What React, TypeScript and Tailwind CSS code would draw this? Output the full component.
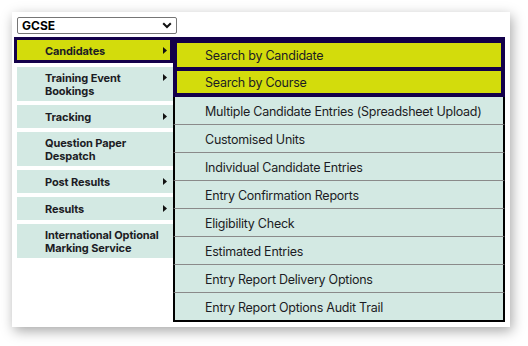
import React from 'react';

const leftItems: { label: string[]; arrow: boolean }[] = [
  { label: ['Training Event', 'Bookings'], arrow: true },
  { label: ['Tracking'], arrow: true },
  { label: ['Question Paper', 'Despatch'], arrow: false },
  { label: ['Post Results'], arrow: true },
  { label: ['Results'], arrow: true },
  { label: ['International Optional', 'Marking Service'], arrow: false },
];

const subItems = [
  'Multiple Candidate Entries (Spreadsheet Upload)',
  'Customised Units',
  'Individual Candidate Entries',
  'Entry Confirmation Reports',
  'Eligibility Check',
  'Estimated Entries',
  'Entry Report Delivery Options',
  'Entry Report Options Audit Trail',
];

const Arrow = () => (
  <svg width="4" height="7" viewBox="0 0 4 7" className="shrink-0">
    <path d="M0 0 L4 3.5 L0 7 Z" fill="#111" />
  </svg>
);

export default function App() {
  return (
    <div className="w-[528px] h-[346px] bg-white pt-3 pl-3 font-['Inter',sans-serif] text-[#1c1c24]">
      <div className="w-[498px] h-[315px] bg-white shadow-[2px_4px_12px_rgba(0,0,0,0.35)] pl-[2px] pt-[5px]">
        <div className="ml-[3px] w-[160px] h-[17px] border border-[#767676] rounded-[2px] bg-white flex items-center justify-between pl-[4px] pr-[4px]">
          <span className="text-[12px] font-bold leading-none text-black pt-[1px]">GCSE</span>
          <svg width="10" height="7" viewBox="0 0 10 7">
            <path d="M1.2 1.2 L5 5 L8.8 1.2" stroke="#111" strokeWidth="2" fill="none" />
          </svg>
        </div>

        <div className="flex mt-[3px]">
          <div className="w-[159px] flex flex-col gap-[4px]">
            <div className="h-[26px] border-[3px] border-[#13004a] bg-[#d3dc0c] flex items-center justify-between pl-[28px] pr-[3px]">
              <span className="text-[11px] font-bold tracking-[-0.01em] pt-[2px]">Candidates</span>
              <Arrow />
            </div>
            {leftItems.map((it) => (
              <div
                key={it.label[0]}
                className={`ml-[3px] w-[156px] bg-[#d3e9e3] flex justify-between pl-[28px] pr-[6px] ${it.label.length > 1 ? 'h-[34px] pt-[5px] items-start' : 'h-[23px] items-center'}`}
              >
                <div className={`text-[11px] font-bold leading-[13px] tracking-[-0.01em] ${it.label.length > 1 ? '' : 'pt-[2px]'}`}>
                  {it.label.map((l) => (
                    <div key={l}>{l}</div>
                  ))}
                </div>
                {it.arrow && (
                  <div className={it.label.length > 1 ? 'pt-[2px]' : ''}>
                    <Arrow />
                  </div>
                )}
              </div>
            ))}
          </div>

          <div className="w-[332px] flex flex-col text-[12.5px] tracking-[-0.02em]">
            <div className="h-[34px] border-x-4 border-t-[6px] border-b-4 border-[#13004a] bg-[#d3dc0c] flex items-center pl-[28px] pt-[3px]">
              Search by Candidate
            </div>
            <div className="h-[26px] border-x-4 border-b-4 border-[#13004a] bg-[#d3dc0c] flex items-center pl-[28px] pt-[3px]">
              Search by Course
            </div>
            {subItems.map((s, i) => (
              <div
                key={s}
                className={`border-x-2 border-black bg-[#d3e9e3] flex items-center pl-[30px] pt-[4px] ${i === subItems.length - 1 ? 'h-[29px] border-b-2' : 'h-[28px] border-b border-b-[#8a8a8a]'}`}
              >
                {s}
              </div>
            ))}
          </div>
        </div>
      </div>
    </div>
  );
}
